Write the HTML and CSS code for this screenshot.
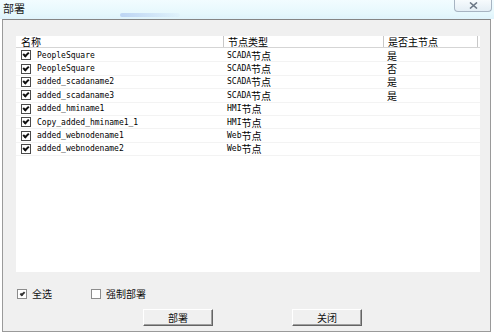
FILE: index.html
```html
<!DOCTYPE html>
<html lang="zh">
<head>
  <meta charset="UTF-8">
  <title>部署</title>
  <link rel="stylesheet" href="styles.css">
</head>
<body>

  <div class="window">
    <!-- Barra de título -->
    <div class="titlebar">
      <span class="title">部署</span>
      <span class="glow"></span>
      <span class="close">
        <svg width="9" height="7" viewBox="0 0 9 7"><path d="M1 0.5 L8 6.5 M8 0.5 L1 6.5" stroke="#6b7785" stroke-width="1.6" fill="none"/></svg>
      </span>
    </div>

    <div class="panel">
      <!-- Lista de nodos -->
      <div class="listview">
        <div class="lv-row lv-head">
          <div class="lv-cell">名称</div>
          <div class="lv-cell sep">节点类型</div>
          <div class="lv-cell sep">是否主节点</div>
        </div>

        <div class="lv-row">
          <div class="lv-cell name"><span class="chk on"></span>PeopleSquare</div>
          <div class="lv-cell type">SCADA<span class="cn">节点</span></div>
          <div class="lv-cell cn">是</div>
        </div>
        <div class="lv-row">
          <div class="lv-cell name"><span class="chk on"></span>PeopleSquare</div>
          <div class="lv-cell type">SCADA<span class="cn">节点</span></div>
          <div class="lv-cell cn">否</div>
        </div>
        <div class="lv-row">
          <div class="lv-cell name"><span class="chk on"></span>added_scadaname2</div>
          <div class="lv-cell type">SCADA<span class="cn">节点</span></div>
          <div class="lv-cell cn">是</div>
        </div>
        <div class="lv-row">
          <div class="lv-cell name"><span class="chk on"></span>added_scadaname3</div>
          <div class="lv-cell type">SCADA<span class="cn">节点</span></div>
          <div class="lv-cell cn">是</div>
        </div>
        <div class="lv-row">
          <div class="lv-cell name"><span class="chk on"></span>added_hminame1</div>
          <div class="lv-cell type">HMI<span class="cn">节点</span></div>
          <div class="lv-cell"></div>
        </div>
        <div class="lv-row">
          <div class="lv-cell name"><span class="chk on"></span>Copy_added_hminame1_1</div>
          <div class="lv-cell type">HMI<span class="cn">节点</span></div>
          <div class="lv-cell"></div>
        </div>
        <div class="lv-row">
          <div class="lv-cell name"><span class="chk on"></span>added_webnodename1</div>
          <div class="lv-cell type">Web<span class="cn">节点</span></div>
          <div class="lv-cell"></div>
        </div>
        <div class="lv-row">
          <div class="lv-cell name"><span class="chk on"></span>added_webnodename2</div>
          <div class="lv-cell type">Web<span class="cn">节点</span></div>
          <div class="lv-cell"></div>
        </div>
      </div>

      <!-- Opciones -->
      <div class="options">
        <label class="opt"><span class="box on"></span>全选</label>
        <label class="opt"><span class="box"></span>强制部署</label>
      </div>

      <!-- Botones -->
      <div class="buttons">
        <button class="btn">部署</button>
        <button class="btn">关闭</button>
      </div>
    </div>
  </div>

</body>
</html>
```

FILE: styles.css
```css
body {
  margin: 0;
  background-color: #fff;
  font-family: "Noto Sans CJK SC", sans-serif;
  color: #111;
}

.window {
  width: 494px;
  height: 333px;
}

.titlebar {
  position: relative;
  height: 19px;
  background: linear-gradient(#f2fcff, #e6f8fd 70%, #dff3fb);
}

.title {
  display: block;
  padding: 2px 0 0 3px;
  font-size: 11px;
  line-height: 13px;
  color: #1a1a1a;
}

.glow {
  position: absolute;
  left: 120px;
  top: 13px;
  width: 60px;
  height: 4px;
  border-radius: 3px;
  background: linear-gradient(90deg, rgba(150,180,235,0.5), rgba(190,210,245,0.1));
}

.close {
  position: absolute;
  right: 2px;
  top: 0;
  width: 36px;
  height: 11px;
  border: 1px solid #a7b4c2;
  border-top: none;
  border-radius: 0 0 4px 4px;
  background: linear-gradient(#f7fbfd, #e4eef5);
  display: flex;
  align-items: center;
  justify-content: center;
}

.panel {
  margin: 0 3px 0 2px;
  height: 313px;
  box-sizing: border-box;
  background-color: #f0f0f0;
  border: 1px solid #9a9a9a;
  border-top-color: #858585;
  padding: 16px 10px 0 13px;
}

.listview {
  height: 236px;
  background-color: #fff;
}

.lv-row {
  display: grid;
  grid-template-columns: 207px 160px 95px;
  height: 13.4px;
  border-bottom: 1px solid #f3f3f3;
  box-sizing: border-box;
  align-items: center;
}

.lv-head {
  height: 12px;
  margin-bottom: 1px;
  border-bottom: 1px solid #d5d5d5;
  color: #1e1e1e;
}

.lv-head .lv-cell:last-child {
  border-right: 1px solid #c8c8c8;
}

.lv-cell {
  padding-left: 4px;
  height: 100%;
  display: flex;
  align-items: center;
  white-space: nowrap;
  font-family: "DejaVu Sans Mono", monospace;
  font-size: 8px;
  line-height: 11px;
  color: #000;
}

.lv-head .lv-cell {
  font-family: "Noto Sans CJK SC", sans-serif;
  font-size: 10px;
  padding-left: 5px;
}

.lv-head .sep {
  border-left: 1px solid #c8c8c8;
  padding-left: 4px;
}

.lv-cell.cn,
.cn {
  font-family: "Noto Sans CJK SC", sans-serif;
  font-size: 10px;
  line-height: 11px;
}

.lv-cell.name {
  padding-left: 5px;
}

.chk {
  width: 8px;
  height: 8px;
  border: 1px solid #4a4a4a;
  background-color: #fff;
  margin-right: 6px;
  display: inline-flex;
  align-items: center;
  justify-content: center;
}

.chk.on::after,
.box.on::after {
  content: "";
  width: 4px;
  height: 2px;
  border-left: 2px solid #111;
  border-bottom: 2px solid #111;
  transform: translateY(-1px) rotate(-45deg);
}

.options {
  display: flex;
  gap: 39px;
  margin-top: 15px;
  margin-left: 1px;
  font-size: 10px;
  line-height: 14px;
}

.opt {
  display: flex;
  align-items: center;
}

.box {
  width: 8px;
  height: 8px;
  border: 1px solid #8c8c8c;
  background-color: #fff;
  margin-right: 5px;
  display: inline-flex;
  align-items: center;
  justify-content: center;
}

.box.on::after {
  width: 3px;
  height: 1px;
  border-left-color: #333;
  border-bottom-color: #333;
}

.buttons {
  display: flex;
  gap: 79px;
  margin-top: 8px;
  margin-left: 127px;
}

.btn {
  width: 70px;
  height: 17px;
  padding: 0;
  font-family: "Noto Sans CJK SC", sans-serif;
  font-size: 10px;
  color: #111;
  background-color: #f0f0f0;
  border: 1px solid;
  border-color: #fff #646464 #646464 #fff;
  box-shadow: inset -1px -1px 0 #a0a0a0;
}
```
